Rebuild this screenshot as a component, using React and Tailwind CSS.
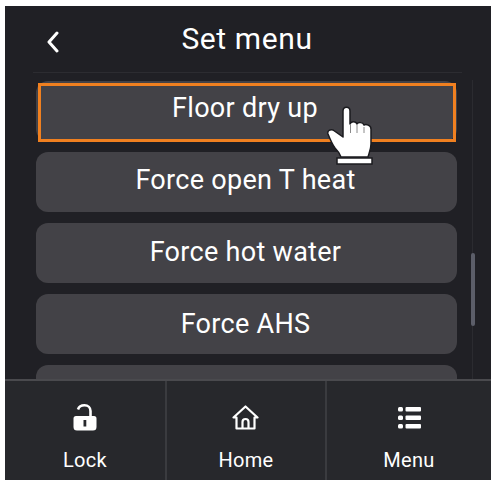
import React from "react";

const items = [
  { label: "Force open T heat", cls: "pb-[4px]" },
  { label: "Force hot water", cls: "pb-[2px]" },
  { label: "Force AHS", cls: "" },
];

// pointer hand over the first row
const HandCursor = () => (
  <svg width="46" height="60" viewBox="0 0 46 60" className="absolute left-[322px] top-[32px]">
    <path
      d="M16 6c0-5 7-5 7 0v13c1-3 6-3 7 0 1-2 6-2 7 1 2-1 7 0 7 4v15c0 5-2 9-3 13H14c-1-3-3-6-6-9-3-4-5-9-7-14-1-3 2-5 5-4l10 7z"
      fill="#fff"
      stroke="#1b1b1f"
      strokeWidth="1.5"
      strokeLinejoin="round"
    />
    <path d="M23.500 19v9M30 20v8M37 22v6" stroke="#8a8a8a" strokeWidth="1" />
    <rect x="10" y="53" width="35" height="6" fill="#fff" stroke="#1b1b1f" strokeWidth="1.5" />
  </svg>
);

const LockIcon = () => (
  <svg width="24" height="27" viewBox="0 0 24 27" fill="none">
    <path d="M5 5.500C6 2.500 8.500 1.300 11.500 1.300c3.500 0 6 2.500 6 5.700v6" stroke="#fff" strokeWidth="2.600" />
    <path
      fillRule="evenodd"
      clipRule="evenodd"
      d="M3 12h18a2.500 2.500 0 0 1 2.500 2.500V23a3.500 3.500 0 0 1-3.500 3.500H4A3.500 3.500 0 0 1 .500 23v-8.500A2.500 2.500 0 0 1 3 12zM10.500 16v6.500h2.800V16z"
      fill="#fff"
    />
  </svg>
);

const HomeIcon = () => (
  <svg width="27" height="25" viewBox="0 0 27 25" fill="none" stroke="#fff" strokeWidth="2.200" strokeLinejoin="round">
    <path d="M1.500 12.500 13.500 1.500l12 11H22.500v11H4.500v-11z" />
    <path d="M10.500 23.500V17a3 3 0 0 1 6 0v6.500" />
  </svg>
);

const MenuIcon = () => (
  <svg width="23" height="22" viewBox="0 0 23 22" fill="#fff">
    <rect x="0" y="0" width="5" height="4.500" rx="1.500" />
    <rect x="0" y="8.500" width="5" height="4.500" rx="1.500" />
    <rect x="0" y="17" width="5" height="4.500" rx="1.500" />
    <rect x="7.500" y="0" width="15.500" height="4.500" rx="1" />
    <rect x="7.500" y="8.500" width="15.500" height="4.500" rx="1" />
    <rect x="7.500" y="17" width="15.500" height="4.500" rx="1" />
  </svg>
);

const tabs = [
  { label: "Lock", icon: <LockIcon />, cls: "w-[160px]", iconCls: "" },
  { label: "Home", icon: <HomeIcon />, cls: "w-[160px] border-l-2 border-[#3a3b3f]", iconCls: "-ml-[2px]" },
  { label: "Menu", icon: <MenuIcon />, cls: "flex-1 border-l-2 border-[#3a3b3f]", iconCls: "pt-[2px]" },
];

const App = () => {
  return (
    <div className="w-[496px] h-[488px] bg-white pt-[6px] pl-[5px] font-['Roboto',sans-serif] text-white overflow-hidden">
      <div className="w-[486px] h-[474px] bg-[#202025] flex flex-col">
        {/* Header */}
        <div className="relative h-[67px] shrink-0 flex items-center justify-center">
          <svg width="14" height="22" viewBox="0 0 14 22" fill="none" className="absolute left-[41px] top-[25px]">
            <path d="M11 2 3 11l8 9" stroke="#fff" strokeWidth="3" strokeLinecap="round" strokeLinejoin="round" />
          </svg>
          <h1 className="text-[30px] font-normal leading-none pb-[1px] -ml-[2px] tracking-[0.6px]">Set menu</h1>
          <div className="absolute left-[28px] right-[29px] bottom-0 h-[1px] bg-[#2c2c31]" />
        </div>

        {/* Scrolling list */}
        <div className="relative flex-1 overflow-hidden pt-[8px] pl-[31px] pr-[34px] flex flex-col gap-[11px]">
          <div className="relative h-[60px] shrink-0 rounded-[12px] bg-[#434247] flex items-center justify-center text-[27px] leading-none pb-[6px] pr-[3px] tracking-[0.3px]">
            Floor dry up
            <div className="absolute left-[2px] right-[1px] top-[2px] -bottom-[1px] border-[3px] border-[#f08020]" />
          </div>
          {items.map((item) => (
            <div
              key={item.label}
              className={`h-[60px] shrink-0 rounded-[12px] bg-[#434247] flex items-center justify-center text-[27px] leading-none pr-[2px] tracking-[0.3px] ${item.cls}`}
            >
              {item.label}
            </div>
          ))}
          <div className="h-[60px] shrink-0 rounded-[12px] bg-[#434247]" />
          <div className="absolute left-[467px] top-[7px] bottom-0 w-[1px] bg-[#2b2b30]" />
          <div className="absolute left-[466px] top-[180px] w-[4px] h-[73px] rounded-[2px] bg-[#5c5e69]" />
          <HandCursor />
        </div>

        {/* Bottom tabs */}
        <div className="h-[101px] shrink-0 border-t-2 border-[#4a4a4e] bg-[#27282c] flex">
          {tabs.map((tab) => (
            <div key={tab.label} className={`${tab.cls} flex flex-col items-center`}>
              <div className={`h-[28px] mt-[22px] flex items-center justify-center ${tab.iconCls}`}>{tab.icon}</div>
              <span className="mt-[17px] text-[20px] leading-[24px] tracking-[0.3px]">{tab.label}</span>
            </div>
          ))}
        </div>
      </div>
    </div>
  );
};

export default App;
